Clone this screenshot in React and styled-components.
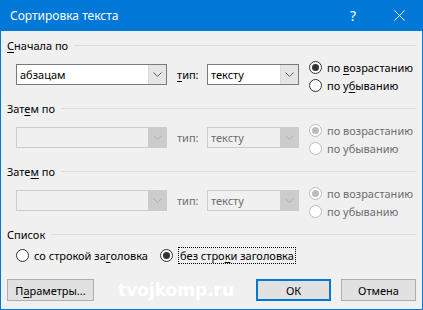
import React from 'react';
import styled, { createGlobalStyle } from 'styled-components';

const Global = createGlobalStyle`
  html, body { margin: 0; padding: 0; background: #f0f0f0; }
  body { font-family: "Noto Sans", "Open Sans", sans-serif; font-size: 11px; color: #000; }
`;

const Window = styled.div`
  width: 423px;
  height: 310px;
  box-sizing: border-box;
  border: 1px solid #0078d7;
  border-top: none;
  background: #f0f0f0;
  display: flex;
  flex-direction: column;
`;

const TitleBar = styled.div`
  height: 31px;
  flex: none;
  background: #0078d7;
  color: #fff;
  display: flex;
  align-items: center;
  padding-left: 9px;
  font-size: 12px;
`;

const Title = styled.div`
  flex: 1;
`;

const TitleButton = styled.div`
  width: 46px;
  height: 31px;
  display: flex;
  align-items: center;
  justify-content: center;
  font-size: 14px;
`;

const Body = styled.div`
  flex: 1;
  display: flex;
  flex-direction: column;
  padding: 6px 6px 8px 6px;
`;

const Group = styled.div`
  display: flex;
  flex-direction: column;
  margin-bottom: ${p => p.$mb ?? 6}px;
`;

const GroupHeader = styled.div`
  height: 16px;
  display: flex;
  align-items: center;
  gap: 6px;
  color: #000;
`;

const HeaderLine = styled.div`
  flex: 1;
  height: 1px;
  background: #dcdcdc;
`;

const SortRow = styled.div`
  margin-top: 5px;
  height: 36px;
  display: flex;
  align-items: flex-start;
  padding-left: 9px;
`;

const Combo = styled.div`
  margin-top: 6px;
  display: flex;
  box-sizing: border-box;
  width: ${p => p.$w}px;
  height: 21px;
  border: 1px solid ${p => (p.$disabled ? '#cccccc' : '#7a7a7a')};
  background: ${p => (p.$disabled ? '#f0f0f0' : '#ffffff')};
`;

const ComboText = styled.div`
  flex: 1;
  padding-left: 3px;
  line-height: 19px;
  color: ${p => (p.$disabled ? '#6d6d6d' : '#000')};
`;

const ComboButton = styled.div`
  width: 17px;
  display: flex;
  align-items: center;
  justify-content: center;
  background: ${p => (p.$disabled ? '#cccccc' : '#e5e5e5')};
  border-left: 1px solid ${p => (p.$disabled ? '#cccccc' : '#dadada')};
`;

const TypeLabel = styled.div`
  width: 30px;
  margin-left: 10px;
  margin-top: 6px;
  line-height: 21px;
  color: ${p => (p.$disabled ? '#6d6d6d' : '#000')};
`;

const RadioColumn = styled.div`
  margin-left: 10px;
  display: flex;
  flex-direction: column;
`;

const RadioItem = styled.div`
  height: 18px;
  display: flex;
  align-items: center;
  gap: 5px;
  color: ${p => (p.$disabled ? '#6d6d6d' : '#000')};
  width: ${p => (p.$w ? `${p.$w}px` : 'auto')};
`;

const Circle = styled.div`
  box-sizing: border-box;
  width: 13px;
  height: 13px;
  border-radius: 50%;
  border: 1px solid ${p => (p.$disabled ? '#bcbcbc' : '#333333')};
  background: #fff;
  display: flex;
  align-items: center;
  justify-content: center;
  flex: none;
`;

const Dot = styled.div`
  width: 7px;
  height: 7px;
  border-radius: 50%;
  background: ${p => (p.$disabled ? '#bcbcbc' : '#333333')};
`;

const ListRow = styled.div`
  margin-top: 4px;
  display: flex;
  align-items: center;
  padding-left: 9px;
`;

const Focus = styled.span`
  border: 1px dotted #000;
  padding: 0 1px;
  line-height: 15px;
`;

const ButtonRow = styled.div`
  margin-top: auto;
  display: flex;
  align-items: center;
`;

const Button = styled.div`
  box-sizing: border-box;
  width: ${p => p.$w}px;
  height: 22px;
  display: flex;
  align-items: center;
  justify-content: center;
  background: #e1e1e1;
  border: ${p => (p.$default ? '2px solid #0078d7' : '1px solid #adadad')};
  margin-left: ${p => p.$ml ?? 0}px;
`;

const Watermark = styled.div`
  margin-left: 24px;
  font-family: "DejaVu Sans", sans-serif;
  font-weight: bold;
  font-size: 17px;
  color: #ffffff;
  flex: 1;
`;

const U = styled.span`
  text-decoration: underline;
  text-underline-offset: 2px;
`;

const Chevron = ({ disabled }) => (
  <svg width="9" height="6" viewBox="0 0 9 6">
    <polyline points="0.5,0.5 4.5,4.5 8.5,0.5" fill="none" stroke={disabled ? '#b0b0b0' : '#606060'} strokeWidth="1" />
  </svg>
);

const Radio = ({ checked, disabled, children, w }) => (
  <RadioItem $disabled={disabled} $w={w}>
    <Circle $disabled={disabled}>{checked && <Dot $disabled={disabled} />}</Circle>
    <span>{children}</span>
  </RadioItem>
);

const SortGroup = ({ title, disabled, value, typeValue, first }) => (
  <Group>
    <GroupHeader>
      <span>{title}</span>
      <HeaderLine />
    </GroupHeader>
    <SortRow>
      <Combo $w={151} $disabled={disabled}>
        <ComboText $disabled={disabled}>{value}</ComboText>
        <ComboButton $disabled={disabled}><Chevron disabled={disabled} /></ComboButton>
      </Combo>
      <TypeLabel $disabled={disabled}>{disabled ? 'тип:' : <><U>т</U>ип:</>}</TypeLabel>
      <Combo $w={92} $disabled={disabled}>
        <ComboText $disabled={disabled}>{typeValue}</ComboText>
        <ComboButton $disabled={disabled}><Chevron disabled={disabled} /></ComboButton>
      </Combo>
      <RadioColumn>
        <Radio checked disabled={disabled}>
          {disabled ? 'по возрастанию' : <>по <U>в</U>озрастанию</>}
        </Radio>
        <Radio disabled={disabled}>
          {disabled ? 'по убыванию' : <>по у<U>б</U>ыванию</>}
        </Radio>
      </RadioColumn>
    </SortRow>
  </Group>
);

export default function App() {
  return (
    <>
      <Global />
      <Window>
        <TitleBar>
          <Title>Сортировка текста</Title>
          <TitleButton>?</TitleButton>
          <TitleButton>
            <svg width="11" height="11" viewBox="0 0 11 11">
              <path d="M0.5 0.5 L10.5 10.5 M10.5 0.5 L0.5 10.5" stroke="#fff" strokeWidth="1" />
            </svg>
          </TitleButton>
        </TitleBar>
        <Body>
          <SortGroup title={<><U>С</U>начала по</>} value="абзацам" typeValue="тексту" />
          <SortGroup title={<>Зат<U>е</U>м по</>} disabled value="" typeValue="тексту" />
          <SortGroup title={<>Зате<U>м</U> по</>} disabled value="" typeValue="тексту" />
          <Group $mb={0}>
            <GroupHeader>
              <span>Список</span>
              <HeaderLine />
            </GroupHeader>
            <ListRow>
              <Radio w={144}>со строкой за<U>г</U>оловка</Radio>
              <Radio checked><Focus>без стро<U>к</U>и заголовка</Focus></Radio>
            </ListRow>
          </Group>
          <ButtonRow>
            <Button $w={87}>П<U>а</U>раметры...</Button>
            <Watermark>tvojkomp.ru</Watermark>
            <Button $w={75} $default>ОК</Button>
            <Button $w={75} $ml={10}>Отмена</Button>
          </ButtonRow>
        </Body>
      </Window>
    </>
  );
}
